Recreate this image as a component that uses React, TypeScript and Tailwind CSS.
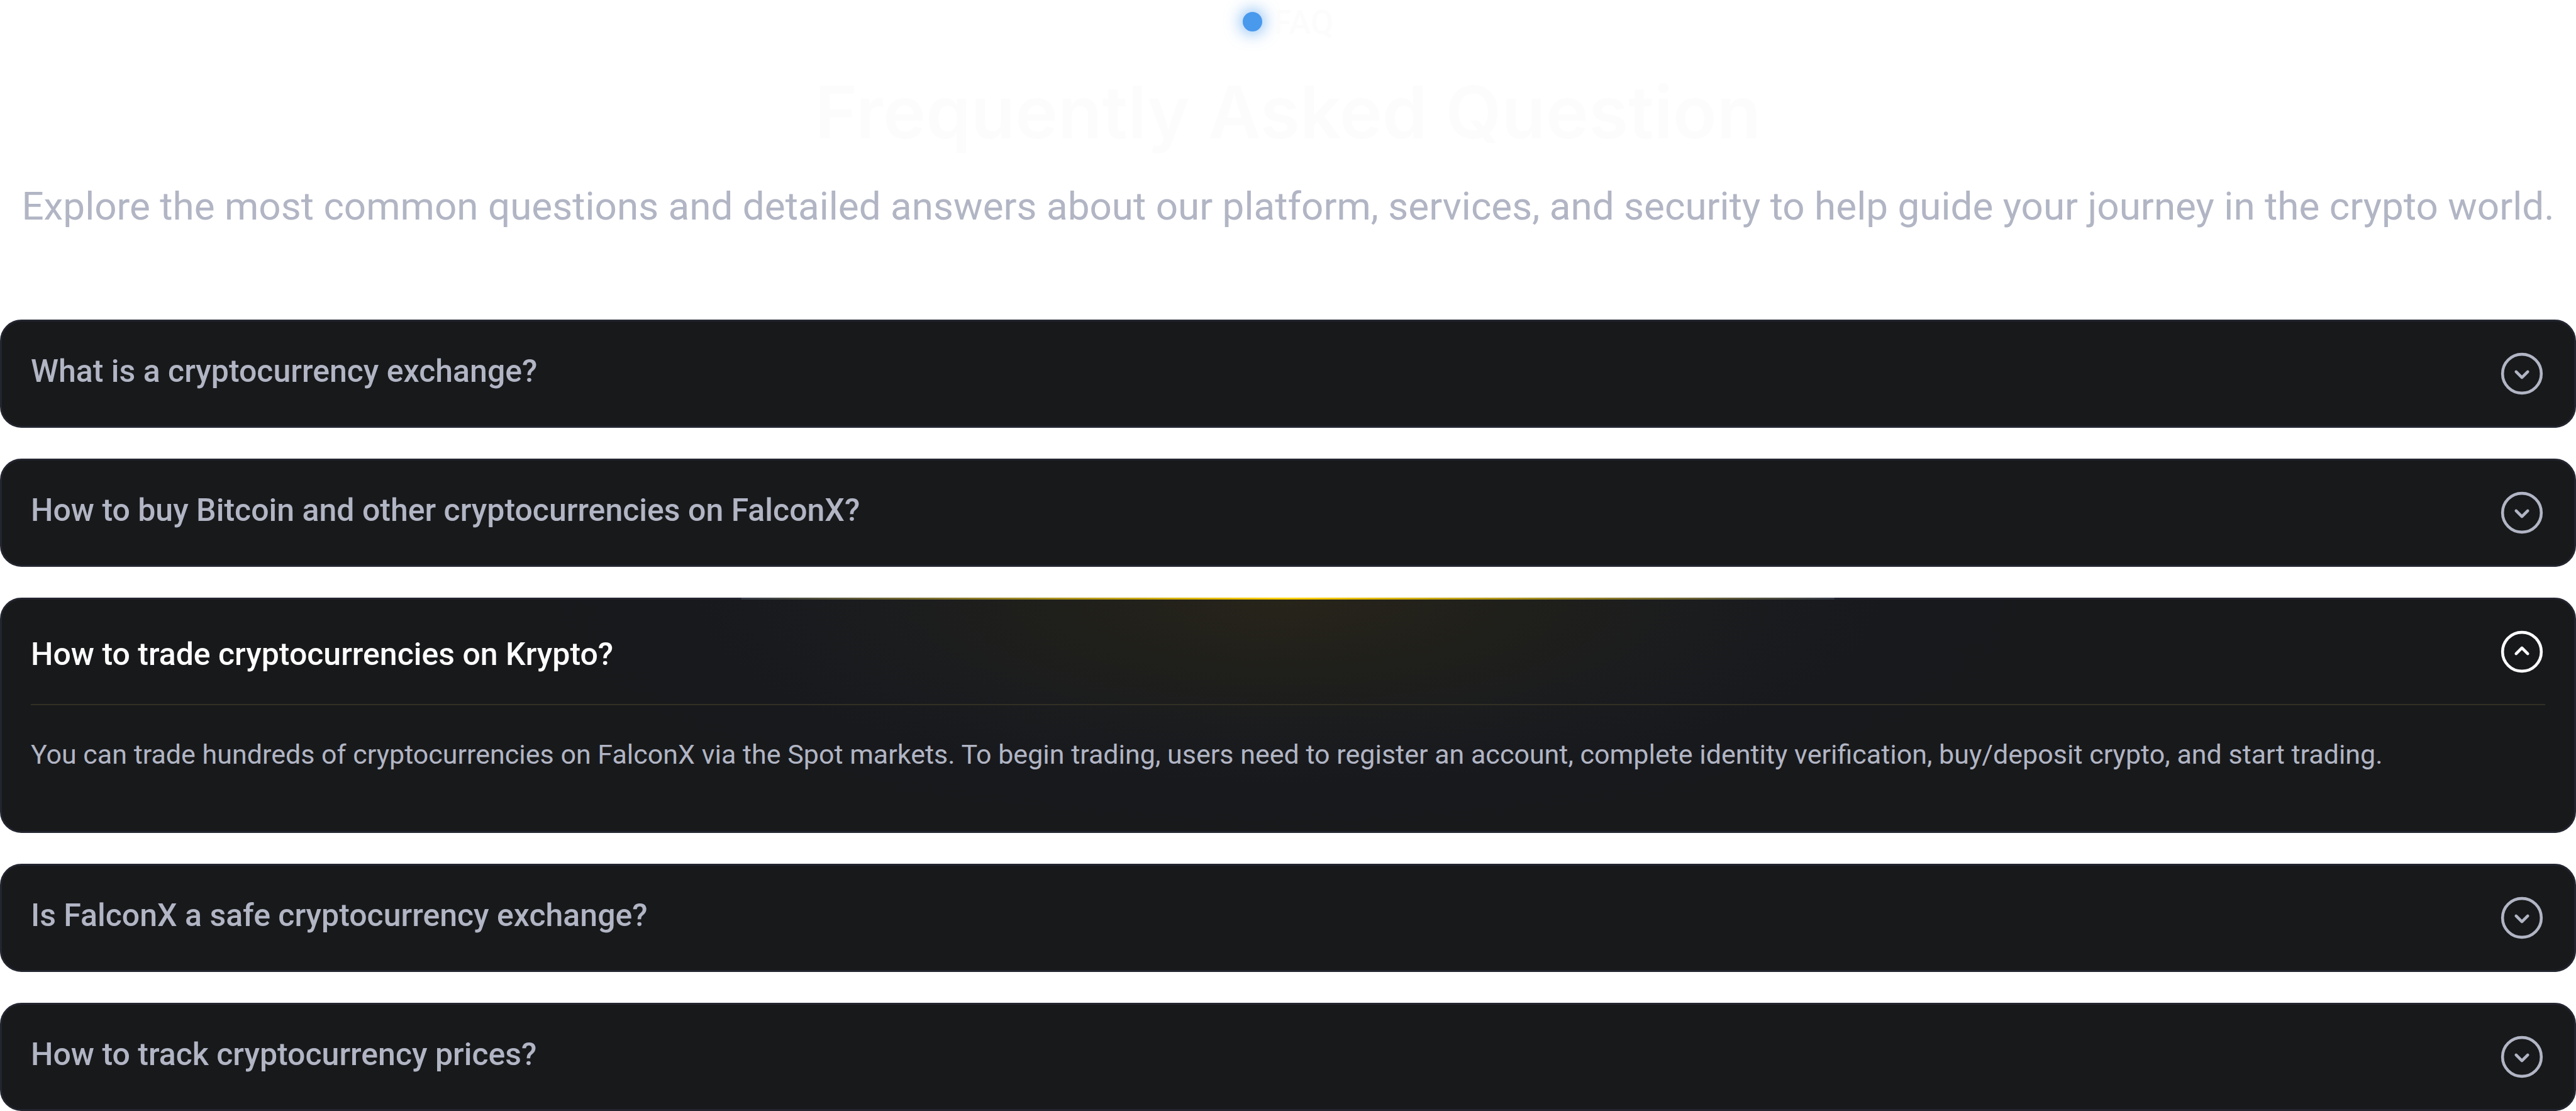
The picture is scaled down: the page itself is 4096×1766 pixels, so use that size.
import { useState } from "react";

type Faq = { question: string; answer: string };

const FAQS: Faq[] = [
  {
    question: "What is a cryptocurrency exchange?",
    answer: "A cryptocurrency exchange is a marketplace where users can buy and sell digital assets.",
  },
  {
    question: "How to buy Bitcoin and other cryptocurrencies on FalconX?",
    answer: "Register an account, verify your identity, and choose a payment method to buy crypto.",
  },
  {
    question: "How to trade cryptocurrencies on Krypto?",
    answer:
      "You can trade hundreds of cryptocurrencies on FalconX via the Spot markets. To begin trading, users need to register an account, complete identity verification, buy/deposit crypto, and start trading.",
  },
  {
    question: "Is FalconX a safe cryptocurrency exchange?",
    answer: "FalconX protects accounts and assets with several layers of security.",
  },
  {
    question: "How to track cryptocurrency prices?",
    answer: "Live prices are listed on the markets page.",
  },
];

function ChevronCircle({ open }: { open: boolean }) {
  return (
    <svg
      viewBox="0 0 24 24"
      fill="none"
      stroke="currentColor"
      strokeWidth="1.5"
      strokeLinecap="round"
      strokeLinejoin="round"
      className="size-[74px] shrink-0"
      aria-hidden="true"
    >
      <circle cx="12" cy="12" r="10" />
      <path d={open ? "M9 13l3-3 3 3" : "M9 11l3 3 3-3"} />
    </svg>
  );
}

function FaqItem({
  faq,
  id,
  open,
  onToggle,
}: {
  faq: Faq;
  id: string;
  open: boolean;
  onToggle: () => void;
}) {
  return (
    <li
      className={`relative rounded-[34px] border-3 border-[#23252f] ${
        open
          ? "bg-[#18191b] bg-[radial-gradient(ellipse_29%_100%_at_50%_0%,#27241a_0%,#1f1f1b_32%,#1b1c1e_56%,#18191d_80%,#18191b_100%)]"
          : "bg-[#18191b]"
      }`}
    >
      {open && (
        <span className="absolute -top-[3px] left-1/2 h-[3px] w-[42.5%] -translate-x-1/2 bg-[linear-gradient(to_right,#343a46,#ffd000,#343a46)]" />
      )}
      <h3>
        <button
          type="button"
          id={`${id}-button`}
          aria-expanded={open}
          aria-controls={`${id}-panel`}
          onClick={onToggle}
          className={`flex min-h-[166px] w-full cursor-pointer items-center justify-between gap-12 px-[46px] text-left text-[50px] leading-[74px] font-medium ${
            open ? "text-[#fcfcfd]" : "text-[#b1b5c4]"
          }`}
        >
          <span className={open ? "pt-2" : "pb-2"}>{faq.question}</span>
          <ChevronCircle open={open} />
        </button>
      </h3>
      {open && (
        <div
          id={`${id}-panel`}
          role="region"
          aria-labelledby={`${id}-button`}
          className="mx-[46px] border-t-2 border-[#323025] pt-[45px] pb-[89px] text-[43px] leading-[66px] text-[#b1b5c4]"
        >
          {faq.answer}
        </div>
      )}
    </li>
  );
}

export default function App() {
  const [openIndex, setOpenIndex] = useState(2);

  return (
    <main className="bg-white font-[Roboto,'Liberation_Sans',sans-serif]">
      <header className="mb-[134px] text-center">
        <div className="flex items-center justify-center gap-[18px]">
          <span className="size-[31px] rounded-full bg-[#4999ed] shadow-[0_0_24px_4px_#4999eda0]" />
          <span className="pt-1 text-[53px] leading-[64px] font-medium text-[#fcfcfd]">FAQ</span>
        </div>
        <h2 className="mt-[39px] font-[Inter,'Liberation_Sans',sans-serif] text-[115px] leading-[144px] font-semibold text-[#fcfcfd]">
          Frequently Asked Question
        </h2>
        <p className="mt-[31px] text-[62px] leading-[92px] text-[#b1b5c4]">
          Explore the most common questions and detailed answers about our platform, services, and security to help
          guide your journey in the crypto world.
        </p>
      </header>
      <ul className="flex flex-col gap-[49px]">
        {FAQS.map((faq, i) => (
          <FaqItem
            key={faq.question}
            faq={faq}
            id={`faq-${i}`}
            open={openIndex === i}
            onToggle={() => setOpenIndex(openIndex === i ? -1 : i)}
          />
        ))}
      </ul>
    </main>
  );
}
